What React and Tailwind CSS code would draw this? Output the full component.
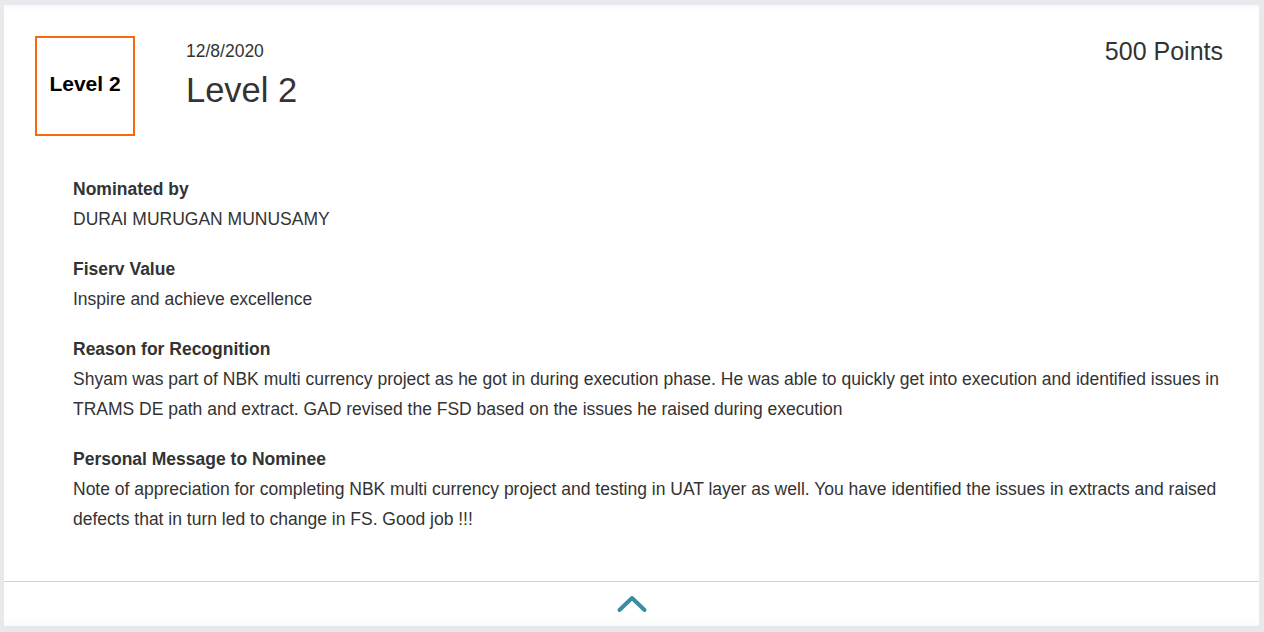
import React from "react";

const SECTIONS = [
  { label: "Nominated by", value: "DURAI MURUGAN MUNUSAMY" },
  { label: "Fiserv Value", value: "Inspire and achieve excellence" },
  {
    label: "Reason for Recognition",
    value:
      "Shyam was part of NBK multi currency project as he got in during execution phase. He was able to quickly get into execution and identified issues in TRAMS DE path and extract. GAD revised the FSD based on the issues he raised during execution",
  },
  {
    label: "Personal Message to Nominee",
    value:
      "Note of appreciation for completing NBK multi currency project and testing in UAT layer as well. You have identified the issues in extracts and raised defects that in turn led to change in FS. Good job !!!",
  },
];

const App = () => {
  return (
    <div
      className="min-h-screen bg-[#e8e9ed] pt-[5px] pl-[4px] pr-[5px] pb-[6px]"
      style={{ fontFamily: '"Liberation Sans", Arial, sans-serif' }}
    >
      <div className="bg-white w-[1255px] shadow-[inset_0_10px_10px_-10px_rgba(0,0,0,0.06),inset_0_-10px_10px_-10px_rgba(0,0,0,0.05)]">
        {/* Header */}
        <div className="flex items-start pt-[31px] pl-[31px] pr-[36px]">
          <div className="w-[100px] h-[100px] border-2 border-[#f7690e] flex items-center justify-center shrink-0 pb-[5px]">
            <span className="text-[21px] font-bold text-black leading-none">Level 2</span>
          </div>
          <div className="ml-[51px] flex-1">
            <p className="text-[17.5px] leading-[21px] mt-[5px] text-[#333]">12/8/2020</p>
            <h2 className="text-[34.5px] leading-[40px] mt-[8px] text-[#333]">Level 2</h2>
          </div>
          <p className="text-[25px] leading-[29px] mt-[1px] text-[#333]">500 Points</p>
        </div>

        {/* Details */}
        <div className="mt-[38px] pl-[69px] pr-[30px] pb-[47px] flex flex-col gap-5 text-[17.5px] leading-[30px] text-[#333]">
          {SECTIONS.map((s, i) => (
            <div key={i}>
              <p className="font-bold">{s.label}</p>
              <p>{s.value}</p>
            </div>
          ))}
        </div>

        {/* Collapse toggle */}
        <div className="border-t border-[#d3d3d3] h-[45px] flex items-center justify-center">
          <svg width="34" height="20" viewBox="0 0 34 20" className="-mt-[1px]">
            <path
              d="M4.5 16 L17 4 L29.5 16"
              fill="none"
              stroke="#3a8e9f"
              strokeWidth="4"
              strokeLinecap="round"
              strokeLinejoin="round"
            />
          </svg>
        </div>
      </div>
    </div>
  );
};

export default App;
